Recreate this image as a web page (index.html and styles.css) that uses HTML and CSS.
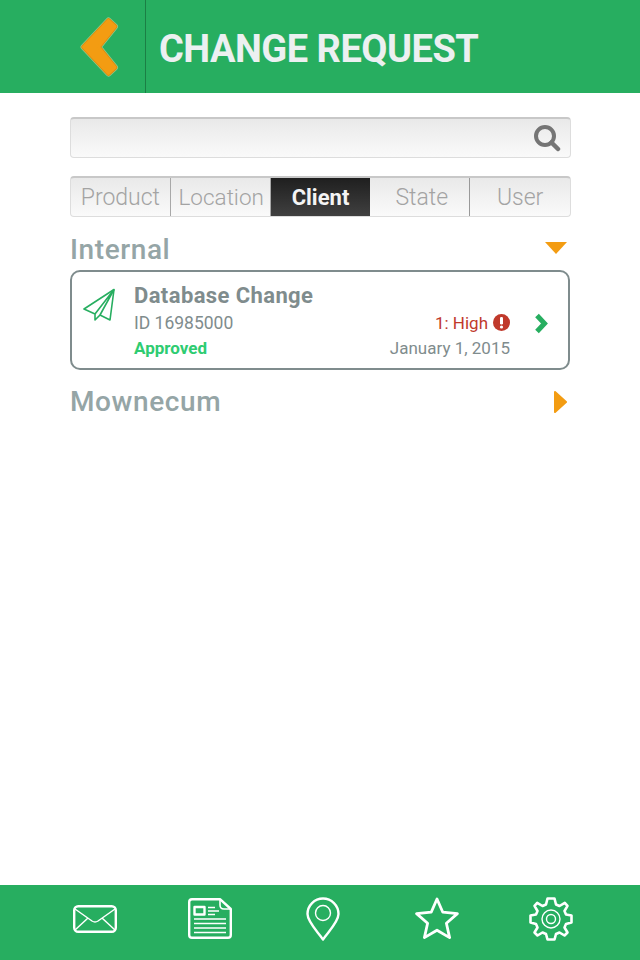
FILE: index.html
```html
<!DOCTYPE html>
<html lang="en">

<head>
  <meta charset="UTF-8" />
  <meta name="viewport" content="width=device-width, initial-scale=1.0" />
  <title>Change Request</title>
  <link rel="stylesheet" href="styles.css">
</head>

<body>
  <div class="app">
    <header class="topbar">
      <a class="back" href="#">
        <svg width="42" height="61" viewBox="0 0 42 61" stroke-linejoin="round">
          <path d="M4.5 31 L29.5 4.5 L36 10.5 L19.5 31 L36 51.5 L29.5 57.5 Z" fill="#f39c12" stroke="#8fc98a" stroke-width="6" />
          <path d="M4.5 31 L29.5 4.5 L36 10.5 L19.5 31 L36 51.5 L29.5 57.5 Z" fill="#f39c12" stroke="#dd8a0a" stroke-width="4.6" />
          <path d="M4.5 31 L29.5 4.5 L36 10.5 L19.5 31 L36 51.5 L29.5 57.5 Z" fill="#f39c12" stroke="#f39c12" stroke-width="3" />
        </svg>
      </a>
      <h1>CHANGE REQUEST</h1>
    </header>

    <main class="content">
      <div class="search">
        <svg width="28" height="28" viewBox="0 0 28 28">
          <circle cx="12" cy="12" r="9" fill="none" stroke="#757575" stroke-width="4" />
          <path d="M18.5 18.5 L25 25" stroke="#757575" stroke-width="4.5" stroke-linecap="round" />
        </svg>
      </div>

      <div class="tabs">
        <div class="tab">Product</div>
        <div class="tab">Location</div>
        <div class="tab active">Client</div>
        <div class="tab">State</div>
        <div class="tab">User</div>
      </div>

      <div class="group-head head-open">
        <h2>Internal</h2>
        <svg width="22" height="12" viewBox="0 0 22 12"><path d="M0 0 H22 L11 12 Z" fill="#f39c12" /></svg>
      </div>

      <div class="card">
        <svg class="plane" width="34" height="34" viewBox="0 0 34 34" fill="none" stroke="#27ae60" stroke-width="1.6" stroke-linejoin="round">
          <path d="M31 1.5 L1 21 L12 26 L12 32 L17 27 L27 32 Z" />
          <path d="M31 1.5 L12 26 M31 1.5 L17 27" />
        </svg>
        <div class="card-main">
          <div class="card-title">Database Change</div>
          <div class="card-id">ID 16985000</div>
          <div class="card-status">Approved</div>
        </div>
        <div class="card-side">
          <div class="priority">1: High
            <svg width="17" height="17" viewBox="0 0 17 17">
              <circle cx="8.5" cy="8.5" r="8.5" fill="#c0392b" />
              <rect x="7" y="3" width="3" height="7.5" rx="1.2" fill="#fff" />
              <circle cx="8.5" cy="13" r="1.6" fill="#fff" />
            </svg>
          </div>
          <div class="card-date">January 1, 2015</div>
        </div>
        <svg class="card-arrow" width="14" height="21" viewBox="0 0 14 21">
          <path d="M3 2.5 L10.5 10.5 L3 18.5" fill="none" stroke="#27ae60" stroke-width="5" />
        </svg>
      </div>

      <div class="group-head head-closed">
        <h2>Mownecum</h2>
        <svg width="13" height="22" viewBox="0 0 13 22"><path d="M1 1 L12 11 L1 21 Z" fill="#f39c12" stroke="#f39c12" stroke-width="2" stroke-linejoin="round" /></svg>
      </div>
    </main>

    <footer class="tabbar">
      <a href="#">
        <svg width="44" height="28" viewBox="0 0 44 28" fill="none" stroke="#fff" stroke-width="2" stroke-linejoin="round">
          <rect x="1.2" y="1.2" width="41.6" height="25.6" rx="4" stroke-width="2.4" />
          <path d="M2 4 L19 16 Q22 18 25 16 L42 4 M2 25 L15 13 M42 25 L29 13" stroke-width="1.5" />
        </svg>
      </a>
      <a class="news" href="#">
        <svg width="44" height="41" viewBox="0 0 44 41" fill="none" stroke="#fff" stroke-width="2.4" stroke-linejoin="round">
          <path d="M4 1.2 H32 L42.8 11 V37 Q42.8 39.8 40 39.8 H4 Q1.2 39.8 1.2 37 V4 Q1.2 1.2 4 1.2 Z" />
          <path d="M32 1.2 V7 Q32 11 36 11 H42.8" stroke-width="1.6" />
          <rect x="6.5" y="9" width="10" height="7.5" />
          <path d="M20 9.5 H27 M20 13 H31 M20 16.5 H27 M6 21 H38 M6 25.5 H38 M6 30 H38 M6 34.5 H38" stroke-width="1.4" />
        </svg>
      </a>
      <a href="#">
        <svg width="34" height="44" viewBox="0 0 34 44" fill="none" stroke="#fff" stroke-width="2.4" stroke-linejoin="round">
          <path d="M17 42.5 C12 35 1.5 25 1.5 17 A15.5 15.5 0 0 1 32.5 17 C32.5 25 22 35 17 42.5 Z" />
          <circle cx="17" cy="16" r="7.5" stroke-width="1.4" />
        </svg>
      </a>
      <a href="#">
        <svg width="44" height="44" viewBox="0 0 44 44" fill="none" stroke="#fff" stroke-width="2.8" stroke-linejoin="round">
          <path d="M22 2 L27.8 15.2 L42.4 16.6 L31.4 26.2 L34.6 40.6 L22 33.2 L9.4 40.6 L12.6 26.2 L1.6 16.6 L16.2 15.2 Z" />
        </svg>
      </a>
      <a href="#">
        <svg width="44" height="44" viewBox="0 0 44 44" fill="none" stroke="#fff" stroke-width="2.6" stroke-linejoin="round">
          <path d="M18.5 1.5 H25.5 L27 7.5 L30.5 9 L35.8 5.8 L38.5 8.8 L35.5 14 L37 17.5 L42.5 18.5 V25.5 L37 27 L35.5 30.5 L38.5 35.5 L35.5 38.5 L30.5 35.5 L27 37 L25.5 42.5 H18.5 L17 37 L13.5 35.5 L8.5 38.5 L5.5 35.5 L8.5 30.5 L7 27 L1.5 25.5 V18.5 L7 17.5 L8.5 14 L5.5 8.8 L8.2 5.8 L13.5 9 L17 7.5 Z" />
          <circle cx="22" cy="22" r="9" stroke-width="1.4" />
          <circle cx="22" cy="22" r="4.5" stroke-width="1.4" />
        </svg>
      </a>
    </footer>
  </div>
</body>

</html>
```

FILE: styles.css
```css
* {
  box-sizing: border-box;
}

body {
  margin: 0;
  font-family: 'Roboto', 'Liberation Sans', sans-serif;
  background: white;
}

.app {
  display: flex;
  flex-direction: column;
  height: 960px;
}

.topbar {
  display: flex;
  align-items: center;
  height: 93px;
  background: #27ae60;
}

.back {
  display: flex;
  align-items: center;
  justify-content: flex-end;
  width: 146px;
  height: 100%;
  padding-right: 24px;
  border-right: 1px solid #1b7f45;
}

.topbar h1 {
  margin: 0 0 0 13px;
  padding-top: 4px;
  font-size: 38px;
  font-weight: 700;
  letter-spacing: -0.5px;
  color: #ecf0f1;
}

.content {
  flex: 1;
  padding: 24px 69px 0 70px;
}

.search {
  display: flex;
  align-items: center;
  justify-content: flex-end;
  height: 41px;
  padding-right: 9px;
  border: 1px solid #ddd;
  border-top: 2px solid #c8c8c8;
  border-radius: 4px;
  background: linear-gradient(to bottom, #e9e9e9, #fafafa);
}

.tabs {
  display: grid;
  grid-template-columns: repeat(5, 1fr);
  height: 41px;
  margin-top: 18px;
  border: 1px solid #ddd;
  border-top: 2px solid #c8c8c8;
  border-radius: 4px;
  background: linear-gradient(to bottom, #e9e9e9, #fafafa);
}

.tab {
  display: flex;
  align-items: center;
  justify-content: center;
  font-size: 23px;
  font-weight: 300;
  color: #a3a3a3;
  border-right: 1px solid #a8a8a8;
}

.tab:nth-child(2) {
  font-size: 22.5px;
  padding-left: 2px;
}

.tab:nth-child(4) {
  padding-left: 4px;
  border-right-color: #999;
}

.tab:last-child {
  border-right: none;
}

.tab.active {
  font-weight: 700;
  font-size: 22px;
  color: #f4f4f4;
  border-right: none;
  background: linear-gradient(to bottom, #1f1f1f, #404040);
}

.group-head {
  display: flex;
  align-items: center;
  justify-content: space-between;
  padding-right: 4px;
  height: 34px;
}

.group-head svg {
  display: block;
}

.head-open {
  margin-top: 16px;
}

.head-open svg {
  margin-bottom: 4px;
}

.head-closed {
  margin-top: 15px;
}

.group-head h2 {
  margin: 0;
  padding-bottom: 2px;
  font-size: 28px;
  font-weight: 500;
  letter-spacing: 0.6px;
  color: #95a5a6;
}

.card {
  display: flex;
  align-items: center;
  height: 100px;
  margin: 3px 1px 0 0;
  padding: 0 20px 0 11px;
  border: 2px solid #7f8c8d;
  border-radius: 10px;
}

.plane {
  align-self: flex-start;
  margin-top: 16px;
}

.card-main {
  flex: 1;
  margin-left: 17px;
  padding-top: 2px;
}

.card-title {
  font-size: 22px;
  font-weight: 700;
  letter-spacing: 0.4px;
  line-height: 28px;
  color: #7f8c8d;
}

.card-id {
  font-size: 17.5px;
  line-height: 26px;
  color: #7f8c8d;
}

.card-status {
  font-size: 17px;
  font-weight: 700;
  line-height: 25px;
  color: #2ecc71;
}

.card-side {
  margin-top: 30px;
  text-align: right;
}

.priority {
  display: flex;
  align-items: center;
  justify-content: flex-end;
  gap: 5px;
  font-size: 17px;
  line-height: 26px;
  color: #c0392b;
}

.card-date {
  font-size: 17px;
  line-height: 25px;
  color: #7f8c8d;
}

.card-arrow {
  margin: 6px 0 0 24px;
}

.tabbar {
  display: grid;
  grid-template-columns: repeat(5, 114px);
  height: 75px;
  padding: 0 38px;
  background: #27ae60;
}

.tabbar a {
  display: flex;
  align-items: center;
  justify-content: center;
  padding-bottom: 8px;
}

.tabbar .news {
  padding-left: 2px;
}
```
